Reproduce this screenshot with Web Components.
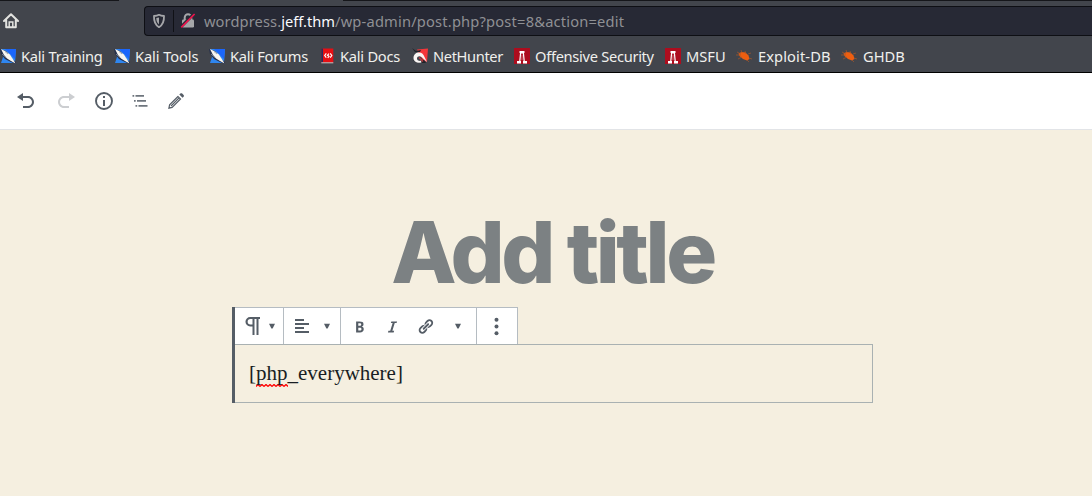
<!DOCTYPE html>
<html lang="en">
<head>
<meta charset="utf-8">
<title>Edit Post</title>
<style>
html,body{margin:0;height:100%;overflow:hidden;background:#f5efe0}
</style>
</head>
<body>
<app-window></app-window>
<script>
const define=(name,html,setup)=>customElements.define(name,class extends HTMLElement{
  constructor(){
    super();
    const t=document.createElement('template');
    t.innerHTML=html;
    this.attachShadow({mode:'open'}).append(t.content.cloneNode(true));
  }
  connectedCallback(){ if(setup) setup(this,this.shadowRoot); }
});

const dragon='<path d="M1 1h15l-1 14H1l2-6z" fill="#2f86f0"/><path d="M5 1h11l-1 10z" fill="#1b66fb"/><path d="M0 1L6 3L10 7L12 11L16 14V16L11 14L5 11L1 6Z" fill="#26304a"/><path d="M1 1L6 3.500L10 6.500L11.500 9L13.500 12L15.500 15.500L11 13L7 10.500L4 7Z" fill="#f8f6f1"/><path d="M2 6L6 9.500M5 3.500L8 6" stroke="#8b94a3" stroke-width=".8"/>';
const tower='<rect width="16" height="16" fill="#ad0d1e"/><path d="M5.500 3h5v2h-.5l.8 8H13v2.500H9V13h.6L8.800 5.500H7.200L6.400 13H7v2.500H3V13h2.200l.8-8h-.5z" fill="#fff"/><path d="M7.600 7h.8v5h-.8z" fill="#d28389"/>';
const bug='<path d="M2.500 5.500l3-1.500 4 .5 3 3 1 3.500-2.500 1.500-4-1.500-3.500-3z" fill="#ee5e10"/><path d="M1 4l4 2M5 2l1 3M9 3l1 3M0 7h5M2 11l4-2M12 6l3-1M11 12l2 2M13 10l3 1" stroke="#a75629" stroke-width=".7" fill="none"/>';
const icons={
  dragon:[16,dragon],tower:[16,tower],bug:[16,bug],
  docs:[16,'<path d="M2.300 .5h12v14h-12z" fill="#e60f14"/><path d="M2.300 .5h1.700v14H2.300z" fill="#26305e"/><path d="M2.300 14.300h12v1h-12z" fill="#cfc3c3"/><path d="M7.300 5.300L5.700 7.500L7.300 9.700M11.200 5.300l1.600 2.200L11.200 9.700M9.900 5.700L8.500 7.300l1.500 1L8.700 10" fill="none" stroke="#fff" stroke-width="1.200"/>'],
  nethunter:[16,'<path d="M5 1.500L16 .5 15 14l-4-2-4-6z" fill="#f4363a"/><path d="M0 0l4 3 5-1-1 2-5 0zM1 12l4 3 9 0-2-3z" fill="#202228"/><path d="M15 14L9.500 9C7.500 7.500 5 8.500 5 10.500S7 13 9 12.500L9.500 14.500C5 15.500 1.500 13.500 1.500 10S4 4.500 7 4.500s4.500 2 5.500 4.500z" fill="#faf6f4"/><path d="M7 9.500l4 4" stroke="#c8383d" stroke-width="1.200"/>'],
  home:[16,'<path d="M1 8L8 1.200 15 8M3.200 7v7.200h9.600V7" fill="none" stroke="#e2e2df" stroke-width="2" stroke-linejoin="round" stroke-linecap="round"/><path d="M6.200 14V9h3.600v5" fill="none" stroke="#e2e2df" stroke-width="1.500"/>'],
  shield:[16,'<path d="M8 1.800c1.500.8 3.200 1.100 5 1.200.2 4.800-.8 8.700-5 11.200C3.800 11.700 2.800 7.800 3 3c1.800-.1 3.500-.4 5-1.200z" fill="none" stroke="#a5a6a9" stroke-width="1.800" stroke-linejoin="round"/><path d="M8 4.500v7c-2.300-1.700-2.700-4-2.700-6.400z" fill="#a5a6a9"/>'],
  lock:[16,'<path d="M4.700 7V4.500a3.300 3.300 0 0 1 6.600 0V7" fill="none" stroke="#a5a6a9" stroke-width="2"/><rect x="2" y="6.500" width="12" height="8" rx="1.200" fill="#a5a6a9"/><path d="M1 13.800L13.500 1.300" stroke="#272935" stroke-width="3"/><path d="M1.300 14.300L14.600 1" stroke="#f0134d" stroke-width="1.700"/>'],
  undo:[20,'<path d="M12 5H7V2L1 6l6 4V7h5c2.200 0 4 1.800 4 4s-1.800 4-4 4H7v2h5c3.300 0 6-2.700 6-6s-2.700-6-6-6z"/>'],
  redo:[20,'<path d="M8 5h5V2l6 4-6 4V7H8c-2.200 0-4 1.800-4 4s1.800 4 4 4h5v2H8c-3.300 0-6-2.700-6-6s2.700-6 6-6z"/>'],
  info:[20,'<circle cx="10" cy="10" r="8" fill="none" stroke="currentColor" stroke-width="1.900"/><path d="M9 5h2v2H9zM9 9h2v6H9z"/>'],
  outline:[20,'<path d="M2.500 4h1.700v1.800H2.500zM5.500 4H14v1.800H5.500zM4 9h1.700v1.800H4zM7 9h9v1.800H7zM5.500 14h1.700v1.800H5.500zM8.500 14h9v1.800h-9z" opacity=".85"/>'],
  pencil:[20,'<path d="M12 5.500L3.600 13.900 2.900 17.100 6.100 16.400 14.500 8zM5 15L12.800 7.200" fill="none" stroke="currentColor" stroke-width="1.200"/><path d="M13.300 3.500L14.400 2.500c.6-.5 1.300-.5 1.800 0l1.400 1.400c.5.5.5 1.200 0 1.800L16.500 6.700z"/>'],
  pilcrow:[20,'<path d="M17 1v2h-1.500v16h-2V3h-2v16h-2v-8.500H7.200A4.750 4.750 0 0 1 7.200 1zM9.500 3H7.400a2.750 2.750 0 0 0 0 5.500h2.100z"/>'],
  align:[20,'<path d="M3 3h9v2H3zM3 7h14v2H3zM3 11h9v2H3zM3 15h14v2H3z"/>'],
  bold:[20,'<path d="M6 4v13h4.540c1.370 0 2.460-.33 3.260-1 .8-.66 1.200-1.580 1.200-2.770 0-.84-.17-1.510-.51-2.010s-.9-.85-1.670-1.030v-.09c.57-.1 1.020-.4 1.360-.9s.51-1.130.51-1.910c0-1.140-.39-1.980-1.170-2.500C12.750 4.260 11.500 4 9.780 4H6zm2.570 5.150V6.260h1.360c.73 0 1.270.11 1.610.32.34.22.51.58.51 1.070 0 .54-.16.92-.47 1.150s-.82.35-1.510.35h-1.500zm0 2.190h1.600c1.440 0 2.160.53 2.160 1.610 0 .6-.17 1.050-.51 1.340s-.86.43-1.570.43H8.570v-3.380z"/>'],
  italic:[20,'<path d="M14.780 6h-2.130l-2.800 9h2.120l-.62 2H4.600l.62-2h2.140l2.800-9H8.030l.62-2h6.750z"/>'],
  link:[20,'<path d="M17.740 2.760c1.680 1.690 1.680 4.410 0 6.100l-1.530 1.520c-1.120 1.120-2.700 1.470-4.140 1.090l2.620-2.610.76-.77.76-.76c.84-.84.84-2.200 0-3.040-.84-.85-2.200-.85-3.040 0l-.77.76-3.380 3.380c-.37-1.440-.02-3.020 1.100-4.140l1.520-1.530c1.690-1.680 4.420-1.680 6.100 0zM8.590 13.430l5.340-5.340c.42-.42.42-1.100 0-1.520-.44-.43-1.130-.39-1.530 0l-5.330 5.340c-.42.42-.42 1.100 0 1.520.44.43 1.130.39 1.520 0zm-.76 2.290l4.140-4.150c.38 1.440.03 3.020-1.090 4.140l-1.520 1.530c-1.690 1.680-4.410 1.680-6.100 0-1.680-1.680-1.680-4.420 0-6.100l1.530-1.520c1.120-1.120 2.700-1.470 4.140-1.100l-4.140 4.150c-.85.84-.85 2.200 0 3.050.84.84 2.200.84 3.040 0z"/>'],
  caret:[6,'<path d="M0 .8h6L3.600 5.500H2.400z"/>'],
  dots:[20,'<circle cx="10" cy="2.900" r="2.100"/><circle cx="10" cy="10" r="2.100"/><circle cx="10" cy="17.100" r="2.100"/>']
};

define('ui-icon','<style>:host{display:block;flex:none;line-height:0}svg{display:block;fill:currentColor}</style><span></span>',(el,root)=>{
  const [box,body]=icons[el.getAttribute('name')], s=el.getAttribute('size')||box;
  root.querySelector('span').innerHTML=`<svg width="${s}" height="${s}" viewBox="0 0 ${box} ${box}">${body}</svg>`;
});

customElements.define('bookmark-bar',class extends HTMLElement{
  constructor(){
    super();
    // icon, label, item width, icon gap, tracking
    const items=[['dragon','Kali Training',114,5,-.24],['dragon','Kali Tools',95,5,-.1],['dragon','Kali Forums',110,5,-.28],['docs','Kali Docs',93,5,-.25],['nethunter','NetHunter',102,5,-.37],['tower','Offensive Security',151,5,-.3],['tower','MSFU',71,5,0],['bug','Exploit-DB',105,6,.1],['bug','GHDB',70,6,0]];
    this.attachShadow({mode:'open'}).innerHTML=`<style>
:host{display:flex;align-items:center;height:36px;padding:4px 0 0;box-sizing:border-box;color:#f0f0ed;font:14.67px/20px "Noto Sans",sans-serif}
div{display:flex;align-items:center;flex:none;white-space:nowrap}
</style>`+items.map(([i,t,w,g,s])=>`<div style="width:${w}px;gap:${g}px;letter-spacing:${s}px"><ui-icon name="${i}"></ui-icon><span>${t}</span></div>`).join('');
  }
});

define('address-bar',`<style>
:host{display:flex;align-items:center;box-sizing:border-box;flex:1;height:30px;border:1px solid #0e0f14;border-right:0;border-radius:4px 0 0 4px;background:#272935;padding-left:6px;color:#8f9094;font:14.67px/20px "Noto Sans",sans-serif;white-space:pre}
i{width:1px;height:22px;background:#101116;margin:0 6px 0 6px}
span{margin-left:8px;letter-spacing:.1px}
b{font-weight:400;color:#fbfbfe;letter-spacing:0}
em{font-style:normal;letter-spacing:.19px}
</style><ui-icon name="shield"></ui-icon><i></i><ui-icon name="lock"></ui-icon><span>wordpress.<b>jeff.thm</b><em>/wp-admin/post.php?post=8&amp;action=edit</em></span>`);

define('browser-chrome',`<style>
:host{display:flex;flex-direction:column;box-sizing:border-box;height:73px;background:#42454c;border-bottom:1px solid #000}
.tabs{display:flex;justify-content:space-between;height:1px}
.tabs i{background:#15161a;width:119px}
.tabs i+i{width:749px}
.nav{display:flex;align-items:center;height:30px;padding:5px 0 0 3px}
.nav address-bar{margin-left:125px}
</style><div class="tabs"><i></i><i></i></div>
<div class="nav"><ui-icon name="home"></ui-icon><address-bar></address-bar></div>
<bookmark-bar></bookmark-bar>`);

define('editor-header',`<style>
:host{display:flex;align-items:center;box-sizing:border-box;height:57px;padding-left:16px;background:#fff;border-bottom:1px solid #e2e4e7;color:#555d66}
ui-icon+ui-icon{margin-left:16px}
ui-icon.off{color:#ccced1;margin-left:20px}
ui-icon.info{margin-left:18px}
</style><ui-icon name="undo"></ui-icon><ui-icon class="off" name="redo"></ui-icon><ui-icon class="info" name="info"></ui-icon><ui-icon name="outline"></ui-icon><ui-icon name="pencil"></ui-icon>`);

define('block-toolbar',`<style>
:host{display:flex;box-sizing:border-box;width:283px;height:37px;border-top:1px solid #b5bcc2;border-right:1px solid #b5bcc2;background:#fff;color:#555d66}
div{display:flex;align-items:center;box-sizing:border-box;border-right:1px solid #b5bcc2;flex:none}
div:last-child{border:0}
</style>
<div style="width:49px;padding-left:8px;gap:6px"><ui-icon name="pilcrow"></ui-icon><ui-icon name="caret"></ui-icon></div>
<div style="width:57px;padding-left:8px;gap:12px"><ui-icon name="align"></ui-icon><ui-icon name="caret"></ui-icon></div>
<div style="width:136px;padding-left:9.500px"><ui-icon name="bold" size="17"></ui-icon><ui-icon name="italic" size="17" style="margin-left:16px"></ui-icon><ui-icon name="link" size="17" style="margin-left:16px"></ui-icon><ui-icon name="caret" style="margin-left:21.500px"></ui-icon></div>
<div style="width:40px;padding-left:10px"><ui-icon name="dots" size="19"></ui-icon></div>`);

define('paragraph-block',`<style>
:host{display:block;box-sizing:border-box;width:641px;border-left:3px solid #555d66}
.body{box-sizing:border-box;height:59px;border:1px solid #a9b1b2;border-left:0;padding:13px 14px;font:21px/30px "Liberation Serif",serif;color:#191e23}
.misspelt{padding-bottom:2px;background:url("data:image/svg+xml,%3Csvg xmlns='http://www.w3.org/2000/svg' width='4' height='3'%3E%3Cpath d='M0 2.500L2 .5L4 2.500' fill='none' stroke='%23f00' stroke-width='1.300'/%3E%3C/svg%3E") left bottom/4px 3px repeat-x}
</style><block-toolbar></block-toolbar><div class="body">[<span class="misspelt">php</span>_everywhere]</div>`);

define('post-editor',`<style>
:host{display:block;height:366px;box-sizing:border-box;padding:73px 0 0 232px;background:#f5efe0}
h1{margin:0;width:641px;height:104px;text-align:center;white-space:nowrap;font:800 85px/100px Inter,sans-serif;letter-spacing:-.0415625em;color:#7c8183}
</style><h1>Add title</h1><paragraph-block></paragraph-block>`);

define('app-window',`<style>:host{display:block;width:1092px;height:496px;overflow:hidden}</style>
<browser-chrome></browser-chrome><editor-header></editor-header><post-editor></post-editor>`);
</script>
</body>
</html>
